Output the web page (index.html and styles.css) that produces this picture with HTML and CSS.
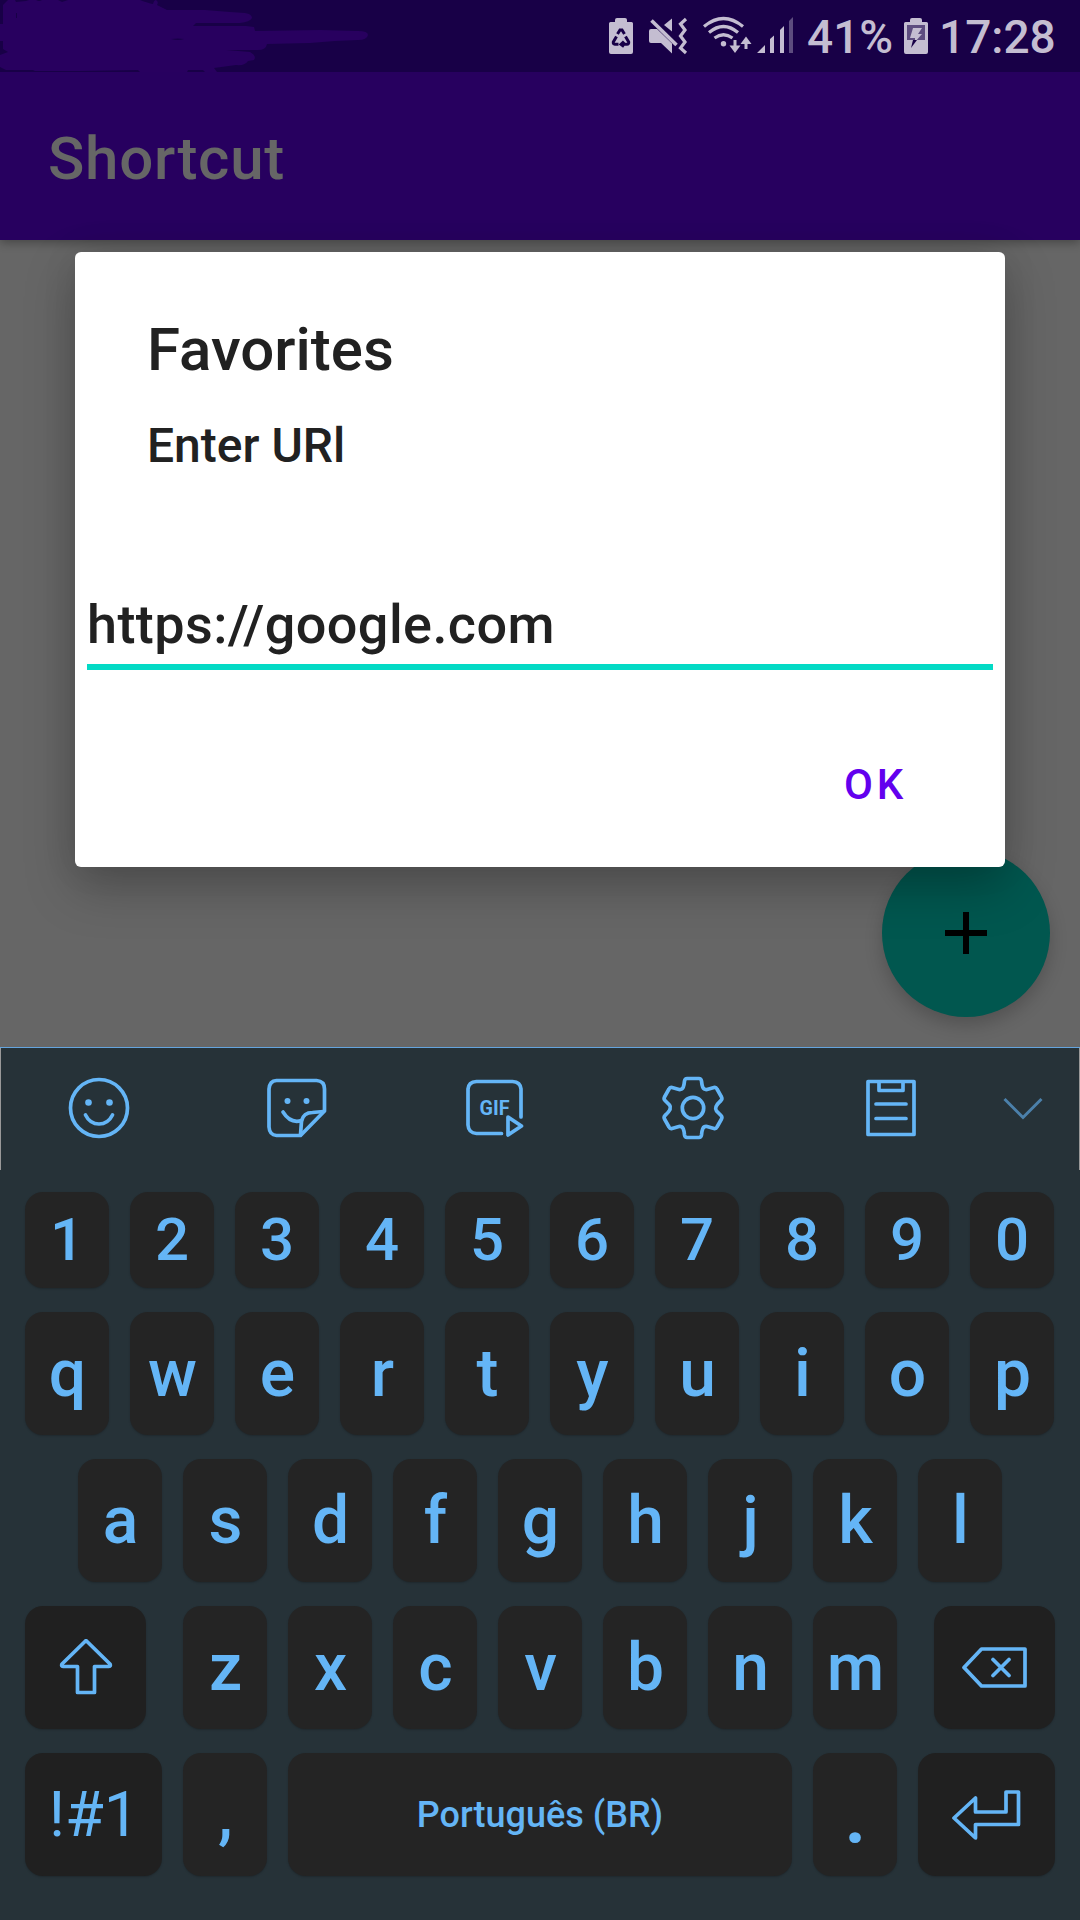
FILE: index.html
```html
<!DOCTYPE html>
<html lang="pt-BR">
<head>
<meta charset="utf-8">
<title>Shortcut</title>
<link rel="stylesheet" href="styles.css">
</head>
<body>
<div class="screen">
  <header class="status">
    <svg class="scribble" width="380" height="72" viewBox="0 0 380 72"><path fill-rule="evenodd" d="M3 5 L8 0 H15 L16 2 L26 1 L29 0 H36 L38 1 H40 L42 0 H58 L62 2 L68 0 H140 Q148 3 153 4 Q154 0 156 0 Q159 2 157 5 L167 10 H205 L230 12 L245 13 Q252 14 252 18 Q250 22 240 23 H196 L193 26 H246 L254 27 L255 31 L320 30 L358 31 Q368 31 368 35 Q367 40 358 40 L335 41 L310 43 L267 44 Q266 50 258 50 L226 50 L250 52 Q257 56 254 60 L248 61 Q245 66 236 65 L214 68 L217 72 H205 L203 70 H188 L187 72 H140 L138 70 L80 71 L35 71 L33 70 H6 L0 67 V55 L8 52 L3 49 V41 H0 V24 L3 24 Z M171 39 Q178 41 184 39 Q178 38 171 39Z M16 13 V18 L17 18 V13Z"/></svg>
    <svg class="status-icons" width="205" height="72" viewBox="600 0 205 72">
      <path class="lit" d="M609 23.500 Q609 22 610.500 22 H615 V20 Q615 18 617 18 H625 Q627 18 627 20 V22 H631.500 Q633 22 633 23.500 V52 Q633 54 631 54 H611 Q609 54 609 52Z"/>
      <g class="recycle"><path d="M617.500 34 L620 30 H622 L624.500 34"/><path d="M616.500 36.500 L613.300 42 Q613 44 615 44.300 H618.500"/><path d="M625.500 36.500 L628.700 42 Q629 44.300 627 44.300 H621.500 M624 41.500 L621 44.300 L624 46.500"/></g>
      <path class="lit" d="M649 31 Q649 29 651 29 H657 L672 43.500 V53.500 L661 43 H651 Q649 43 649 41Z M664 25 L672 18.500 V31.500Z"/>
      <path class="line" d="M651.500 20.500 L676.500 45" stroke-width="3.600"/>
      <path class="line" d="M686 19 L680.500 24 L685 30 L680.500 36 L685 42 L680.500 48 L686 53" stroke-width="3.200"/>
      <g class="line" stroke-width="3.200"><path d="M704 26.500 Q723.500 10.500 743 26.500"/><path d="M709 32.500 Q723.500 20.500 738 32.500"/><path d="M714.500 38 Q723.500 31.500 732.500 38"/></g>
      <circle class="lit" cx="723.500" cy="43.800" r="2.700"/>
      <path class="line" d="M735 40 V49 M746 49 V40" stroke-width="3"/>
      <path class="lit" d="M729.500 45.500 H740.500 L735 53Z M740.500 44 L746 36.500 L751.500 44Z"/>
      <path class="lit" d="M757 53 L765 45 V53Z M770 39 L774 35.500 V53 H770Z M780 30 L784 26 V53 H780Z"/>
      <path class="dim" d="M789 21 L793 17 V53 H789Z"/>
    </svg>
    <span class="percent">41%</span>
    <svg class="battery" width="24" height="72" viewBox="904 0 24 72">
      <path class="lit" d="M904 23.500 Q904 22 905.500 22 H910 V20 Q910 18 912 18 H920 Q922 18 922 20 V22 H926.500 Q928 22 928 23.500 V52 Q928 54 926 54 H906 Q904 54 904 52Z"/>
      <path class="hollow" d="M907 25 H925 V40 H907Z"/>
      <path class="lit" d="M913 28 H922 L918 34 H922 L915 42 L915 38 H910Z"/>
      <path class="tip" d="M913 40 H917 L911 48Z"/>
    </svg>
    <span class="clock">17:28</span>
  </header>
  <div class="appbar"><h1 class="app-title">Shortcut</h1></div>
  <main class="content">
    <section class="dialog">
      <h2 class="dialog-title">Favorites</h2>
      <p class="message">Enter URl</p>
      <div class="field">https://google.com</div>
      <div class="actions"><button class="ok">OK</button></div>
    </section>
    <div class="fab"><svg width="42" height="42" viewBox="0 0 42 42"><path d="M18 0h6v18h18v6H24v18h-6V24H0v-6h18z"/></svg></div>
  </main>
  <section class="keyboard">
    <nav class="tools">
      <svg class="tool" width="64" height="68" viewBox="0 0 64 68"><ellipse cx="32" cy="34" rx="28.500" ry="28.500"/><circle class="dot" cx="21.500" cy="28.500" r="3.300"/><circle class="dot" cx="42.500" cy="28.500" r="3.300"/><path d="M18.500 41 Q23 50 32 50 Q41 50 45.500 41"/></svg>
      <svg class="tool" width="64" height="68" viewBox="-0.500 0 64 68"><path d="M11 6.500 H51 Q59 7 59 15 V37 L35 61.500 H11 Q4 61 3.500 53 V15 Q4 7 11 6.500Z"/><path d="M35 61 L36 47 Q38 38.500 47 38.500 L58 37.500"/><path d="M17.500 38 Q25 50 36 46.500"/><circle class="dot" cx="22" cy="27" r="3"/><circle class="dot" cx="41" cy="27" r="3"/></svg>
      <svg class="tool" width="64" height="68" viewBox="-0.500 0 64 68"><path d="M38 59.500 H13 Q5 59 4.500 51 V15 Q5 8 13 7.500 H49 Q57 8 57.500 15 V43"/><path d="M44.500 43 L58 52 L44.500 61Z"/><text class="gif" x="31" y="41" textLength="30" lengthAdjust="spacingAndGlyphs">GIF</text></svg>
      <svg class="tool" width="64" height="68" viewBox="0 0 64 68"><path d="M26 4.500 H38 Q40 4.500 40.500 7 C41 12 41.500 16 46 15.500 L53 13.500 Q55 13 56 15 L60.500 23 Q61.500 25 60 26.500 C55 31 53 34 55.500 37 L60 41.500 Q61.500 43 60.500 45 L56 53 Q55 55 53 54.500 L46 52.500 C41.500 52 41 56 40.500 61 Q40 63.500 38 63.500 H26 Q24 63.500 23.500 61 C23 56 22.500 52 18 52.500 L11 54.500 Q9 55 8 53 L3.500 45 Q2.500 43 4 41.500 C9 37 11 34 8.500 31 L4 26.500 Q2.500 25 3.500 23 L8 15 Q9 13 11 13.500 L18 15.500 C22.500 16 23 12 23.500 7 Q24 4.500 26 4.500Z"/><circle cx="32" cy="34" r="10.700"/></svg>
      <svg class="tool" width="64" height="68" viewBox="0 0 64 68"><path d="M9 7.500 H55 V60.500 H9Z M20 8 V16.500 H44 V8 M17 30 H47 M17 44.500 H47"/></svg>
      <svg class="tool chevron" width="40" height="68" viewBox="0 0 40 68"><path d="M1.500 25 L20 43.500 L38.500 25"/></svg>
    </nav>
    <div class="row wide digits"><kbd class="key">1</kbd><kbd class="key">2</kbd><kbd class="key">3</kbd><kbd class="key">4</kbd><kbd class="key">5</kbd><kbd class="key">6</kbd><kbd class="key">7</kbd><kbd class="key">8</kbd><kbd class="key">9</kbd><kbd class="key">0</kbd></div>
    <div class="row wide"><kbd class="key">q</kbd><kbd class="key">w</kbd><kbd class="key">e</kbd><kbd class="key">r</kbd><kbd class="key">t</kbd><kbd class="key">y</kbd><kbd class="key">u</kbd><kbd class="key">i</kbd><kbd class="key">o</kbd><kbd class="key">p</kbd></div>
    <div class="row"><kbd class="key">a</kbd><kbd class="key">s</kbd><kbd class="key">d</kbd><kbd class="key">f</kbd><kbd class="key">g</kbd><kbd class="key">h</kbd><kbd class="key">j</kbd><kbd class="key">k</kbd><kbd class="key">l</kbd></div>
    <div class="row">
      <kbd class="key dark shift"><svg width="54" height="58" viewBox="1 2 54 58"><path d="M28 3.500 L52 27 Q53 29.500 51 29.500 H36.500 V55.500 H19.500 V29.500 H5 Q3 29.500 4 27Z"/></svg></kbd>
      <kbd class="key">z</kbd><kbd class="key">x</kbd><kbd class="key">c</kbd><kbd class="key">v</kbd><kbd class="key">b</kbd><kbd class="key">n</kbd><kbd class="key">m</kbd>
      <kbd class="key dark backspace"><svg width="68" height="44" viewBox="0.500 0.500 68 44"><path d="M21 3.500 H64.500 V40.500 H21 L3.500 22Z M32.500 14 L48.500 30 M48.500 14 L32.500 30"/></svg></kbd>
    </div>
    <div class="row">
      <kbd class="key dark symbols">!#1</kbd><kbd class="key">,</kbd><kbd class="key space">Português (BR)</kbd><kbd class="key period">.</kbd>
      <kbd class="key dark enter"><svg width="72" height="54" viewBox="0 0 72 54"><path d="M3 30 L24.500 10 V24 H55 V4 H67.500 V36.500 H24.500 V50Z"/></svg></kbd>
    </div>
  </section>
</div>
</body>
</html>
```
FILE: styles.css
```css
* { box-sizing: border-box; }
body { margin: 0; font-family: Roboto, sans-serif; font-weight: 500; }
h1, h2, p { margin: 0; font-weight: 500; }
.screen { width: 1080px; height: 1920px; overflow: hidden; display: flex; flex-direction: column; background: #666; }

.status { position: relative; height: 72px; flex: none; display: flex; align-items: center; justify-content: flex-end; padding-right: 25px; background: #180047; color: #c4bdd1; z-index: 2; }
.scribble { position: absolute; left: 0; top: 0; fill: #28005f; }
.status-icons { flex: none; }
.lit { fill: #c4bdd1; }
.line { fill: none; stroke: #c4bdd1; }
.dim { fill: #5d4c7f; }
.hollow { fill: #5d4c7f; }
.tip { fill: #180047; }
.recycle { fill: none; stroke: #180047; stroke-width: 3; }
.percent, .clock { font-size: 46px; line-height: 72px; padding-top: 1px; }
.percent { width: 86px; margin: 0 11px 0 2px; }
.clock { width: 116px; margin-left: 11px; }

.appbar { position: relative; z-index: 1; height: 168px; flex: none; display: flex; align-items: center; padding: 5px 48px 0; background: #27005f; box-shadow: 0 3px 9px rgba(0, 0, 0, .3); }
.app-title { color: #666; font-size: 60px; letter-spacing: .75px; }

.content { position: relative; height: 807px; flex: none; padding: 12px 75px 0; }
.dialog { position: relative; z-index: 3; height: 615px; display: flex; flex-direction: column; background: #fff; border-radius: 6px; color: #212121; box-shadow: 0 20px 50px rgba(0, 0, 0, .25), 0 0 36px rgba(0, 0, 0, .08); }
.dialog-title { padding: 62px 72px 0; font-size: 60px; line-height: 71px; }
.message { padding: 31px 72px 0; font-size: 48px; line-height: 60px; }
.field { margin: 107px 12px 0; height: 87px; border-bottom: 6px solid #03dac5; font-size: 54px; line-height: 83px; letter-spacing: .42px; }
.actions { display: flex; justify-content: flex-end; padding: 79px 98px 0 0; }
.ok { border: 0; padding: 0; background: none; color: #6200ee; font: 500 42px/72px Roboto, sans-serif; letter-spacing: 3.75px; }
.fab { position: absolute; z-index: 2; right: 30px; bottom: 30px; width: 168px; height: 168px; border-radius: 50%; display: flex; align-items: center; justify-content: center; background: #01574f; box-shadow: 0 8px 18px rgba(0, 0, 0, .2); }

.keyboard { position: relative; z-index: 4; flex: 1; display: flex; flex-direction: column; gap: 24px; background: #263238; border-top: 1px solid #64a4de; }
.tools { height: 122px; margin-bottom: -2px; display: flex; align-items: center; padding: 0 36px 2px 66px; border-left: 1px solid #999; border-right: 1px solid #999; gap: 134px; }
.tool { flex: none; fill: none; stroke: #64b5f6; stroke-width: 3.700; stroke-linejoin: round; stroke-linecap: round; }
.tool .dot { fill: #64b5f6; stroke: none; }
.gif { fill: #64b5f6; stroke: none; font-size: 21px; font-weight: 700; text-anchor: middle; }
.chevron { opacity: .6; margin-left: -54px; stroke-width: 3; stroke-linecap: butt; stroke-linejoin: miter; }
.row { display: flex; justify-content: center; gap: 21px; height: 123px; }
.wide { padding-right: 1px; }
.digits { height: 96px; }
.key { width: 84px; flex: none; display: flex; align-items: center; justify-content: center; padding-left: 1px; border-radius: 18px; background: #242424; color: #64b5f6; font: 500 66px/1 Roboto, sans-serif; box-shadow: 0 1px 2px rgba(0, 0, 0, .2); }
.digits .key { font-size: 60px; padding: 0; }
.dark { background: #202020; padding-left: 0; }
.key svg { fill: none; stroke: #64b5f6; stroke-width: 3.700; stroke-linejoin: round; stroke-linecap: round; }
.shift { width: 121px; margin-right: 16px; }
.backspace { width: 121px; margin-left: 16px; }
.symbols { width: 137px; padding-left: 1px; font-size: 63px; font-weight: 400; }
.space { width: 504px; font-size: 36px; padding-left: 0; }
.enter { width: 137px; }
.period { font-size: 84px; }
```
